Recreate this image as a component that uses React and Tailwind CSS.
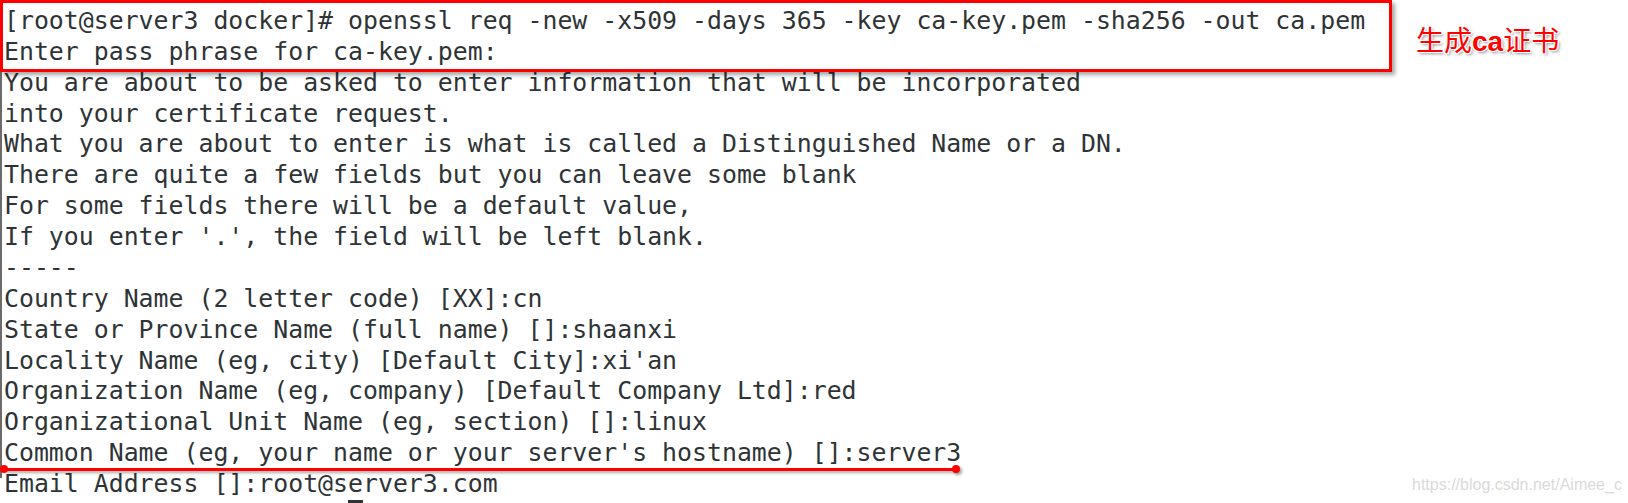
import React from 'react'

const lines = [
  "[root@server3 docker]# openssl req -new -x509 -days 365 -key ca-key.pem -sha256 -out ca.pem",
  'Enter pass phrase for ca-key.pem:',
  'You are about to be asked to enter information that will be incorporated',
  'into your certificate request.',
  'What you are about to enter is what is called a Distinguished Name or a DN.',
  'There are quite a few fields but you can leave some blank',
  'For some fields there will be a default value,',
  "If you enter '.', the field will be left blank.",
  '-----',
  'Country Name (2 letter code) [XX]:cn',
  'State or Province Name (full name) []:shaanxi',
  "Locality Name (eg, city) [Default City]:xi'an",
  'Organization Name (eg, company) [Default Company Ltd]:red',
  'Organizational Unit Name (eg, section) []:linux',
  "Common Name (eg, your name or your server's hostname) []:server3",
  'Email Address []:root@server3.com',
]

const App = () => {
  return (
    <div className="relative w-[1628px] h-[503px] overflow-hidden bg-white">
      {/* terminal text */}
      <div className="h-full border-l-2 border-[#6b6b6b] pl-[2px] -mt-[25px] font-['DejaVu_Sans_Mono',monospace] text-[24.85px] leading-[30.87px] text-[#2e3436] whitespace-pre">
        <div>{'e is 65537 (0x10001)'}</div>
        {lines.map((line, i) => (
          <div key={i}>{line}</div>
        ))}
        <div className="flex items-start">
          <span>{'[root@server3 docker]# '}</span>
          <span className="inline-block w-[15px] h-[28px] bg-[#2e3436]" />
        </div>
      </div>

      {/* red box around command */}
      <div className="absolute left-0 top-0 w-[1392px] h-[72px] border-[3.5px] border-[#ff0000] shadow-[3px_3px_4px_rgba(0,0,0,0.35)]" />

      {/* label */}
      <div className="absolute left-[1416px] top-[24px] leading-[30px] text-[28px] text-[#ff0000] font-['Noto_Sans_CJK_SC',sans-serif] [text-shadow:1px_1px_0_#fff,-1px_-1px_0_#fff,1px_-1px_0_#fff,-1px_1px_0_#fff,2px_2px_3px_rgba(0,0,0,0.45)]">
        生成<span className="font-bold font-['Liberation_Sans',sans-serif]">ca</span>证书
      </div>

      {/* underline with dots */}
      <div className="absolute left-[4px] top-[467.5px] w-[952px] h-[3px] bg-[#ff0000] shadow-[2px_2px_3px_rgba(0,0,0,0.35)]" />
      <div className="absolute left-0 top-[465px] w-[8px] h-[8px] rounded-full bg-[#ff0000]" />
      <div className="absolute left-[952px] top-[465px] w-[8px] h-[8px] rounded-full bg-[#ff0000] shadow-[2px_2px_3px_rgba(0,0,0,0.35)]" />

      {/* watermark */}
      <div className="absolute left-[1412px] top-[475px] text-[16px] leading-[20px] text-[#dadada] font-['Liberation_Sans',sans-serif]">
        https://blog.csdn.net/Aimee_c
      </div>
    </div>
  )
}

export default App
